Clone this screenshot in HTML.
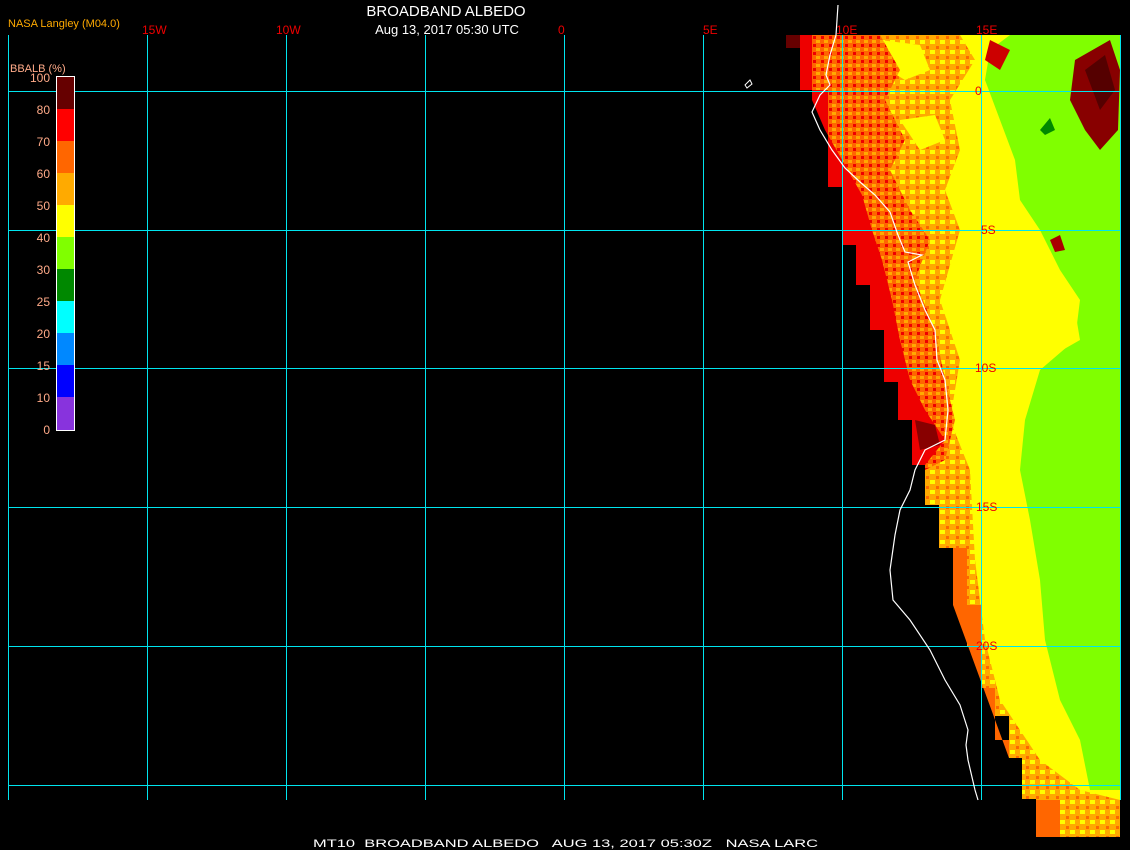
<!DOCTYPE html>
<html><head><meta charset="utf-8"><style>
html,body{margin:0;padding:0;background:#000;width:1130px;height:850px;overflow:hidden}
svg{display:block}
text{font-family:"Liberation Sans",sans-serif}
</style></head><body>
<svg width="1130" height="850" viewBox="0 0 1130 850" xmlns="http://www.w3.org/2000/svg">
<defs>
<pattern id="mixo" width="8" height="8" patternUnits="userSpaceOnUse">
<rect width="8" height="8" fill="#ff6600"/><rect x="0" y="0" width="4" height="3" fill="#ffaa00"/><rect x="5" y="4" width="3" height="3" fill="#ee0000"/>
</pattern>
<pattern id="mixy" width="10" height="10" patternUnits="userSpaceOnUse">
<rect width="10" height="10" fill="#ffaa00"/><rect x="0" y="0" width="5" height="4" fill="#ffff00"/><rect x="6" y="6" width="3" height="3" fill="#ff6600"/>
</pattern>
</defs>
<rect width="1130" height="850" fill="#000"/>
<polygon fill="#ffff00" points="786,35 1120,35 1120,837 1036,837 1036,799 1022,799 1022,758 1009,758 1009,716 995,716 995,688 981,688 981,647 967,647 967,605 953,605 953,548 939,548 939,505 925,505 925,465 912,465 912,420 898,420 898,382 884,382 884,330 870,330 870,285 856,285 856,245 843,245 843,187 828,187 828,90 800,90 800,48 786,48"/>
<polygon fill="#80ff00" points="1010,35 1120,35 1120,790 1090,790 1080,740 1060,700 1045,640 1040,580 1030,520 1020,470 1025,420 1040,370 1075,340 1080,300 1060,270 1040,230 1020,200 1015,160 1000,120 985,80 990,50"/>
<polygon fill="#ffff00" points="1030,300 1075,310 1080,340 1045,360 1030,340"/>
<polygon fill="url(#mixy)" points="786,35 960,35 975,60 950,100 960,150 945,190 960,230 940,300 960,360 950,420 970,470 975,560 985,640 1000,700 1040,760 1080,790 1120,800 1120,837 1036,837 1036,799 1022,799 1022,758 1009,758 1009,716 995,716 995,688 981,688 981,647 967,647 967,605 953,605 953,548 939,548 939,505 925,505 925,465 912,465 912,420 898,420 898,382 884,382 884,330 870,330 870,285 856,285 856,245 843,245 843,187 828,187 828,90 800,90 800,48 786,48"/>
<polygon fill="#ffff00" points="880,40 920,45 930,70 905,80 880,65"/>
<polygon fill="#ffff00" points="900,120 935,115 945,140 920,150"/>
<polygon fill="url(#mixo)" points="786,35 880,35 900,70 885,100 905,140 890,170 910,210 930,240 915,280 935,330 945,380 955,420 945,460 925,470 925,465 912,465 912,420 898,420 898,382 884,382 884,330 870,330 870,285 856,285 856,245 843,245 843,187 828,187 828,90 800,90 800,48 786,48"/>
<polygon fill="#ff6600" points="953,548 967,548 967,605 981,605 981,688 995,688 995,740 1009,740 1009,758 953,605"/>
<polygon fill="#ff6600" points="1036,800 1060,800 1060,837 1036,837"/>
<polygon fill="#ee0000" points="786,35 812,35 812,100 825,130 845,165 862,195 872,230 882,260 892,300 900,340 910,380 925,410 945,440 925,465 912,465 912,420 898,420 898,382 884,382 884,330 870,330 870,285 856,285 856,245 843,245 843,187 828,187 828,90 800,90 800,48 786,48"/>
<polygon fill="#660000" points="786,35 800,35 800,48 786,48"/>
<polygon fill="#880000" points="915,420 935,425 940,445 920,450"/>
<polygon fill="#880000" points="1075,60 1110,40 1120,70 1118,130 1100,150 1085,130 1070,100"/>
<polygon fill="#550000" points="1085,70 1105,55 1115,90 1100,110"/>
<polygon fill="#cc0000" points="990,40 1010,50 1000,70 985,60"/>
<polygon fill="#008800" points="1040,130 1050,118 1055,130 1045,135"/>
<polygon fill="#aa0000" points="1050,240 1060,235 1065,250 1055,252"/>
<g stroke="#00e5ee" stroke-width="1">
<line x1="8.5" y1="35" x2="8.5" y2="800"/><line x1="147.5" y1="35" x2="147.5" y2="800"/><line x1="286.5" y1="35" x2="286.5" y2="800"/><line x1="425.5" y1="35" x2="425.5" y2="800"/><line x1="564.5" y1="35" x2="564.5" y2="800"/><line x1="703.5" y1="35" x2="703.5" y2="800"/><line x1="842.5" y1="35" x2="842.5" y2="800"/><line x1="981.5" y1="35" x2="981.5" y2="800"/><line x1="1120.5" y1="35" x2="1120.5" y2="800"/>
<line x1="8" y1="91.5" x2="1120" y2="91.5"/><line x1="8" y1="230.5" x2="1120" y2="230.5"/><line x1="8" y1="368.5" x2="1120" y2="368.5"/><line x1="8" y1="507.5" x2="1120" y2="507.5"/><line x1="8" y1="646.5" x2="1120" y2="646.5"/><line x1="8" y1="785.5" x2="1120" y2="785.5"/>
</g>
<polyline fill="none" stroke="#fff" stroke-width="1.2" points="838,5 836,35 830,55 826,75 830,85 820,95 812,112 820,130 832,150 845,168 860,182 875,195 890,212 898,235 905,252 922,255 908,262 915,285 925,310 935,330 937,360 945,380 948,410 945,440 925,450 915,470 910,490 900,510 895,535 890,570 893,600 910,620 930,650 945,680 960,705 968,730 966,745 968,760 975,790 978,800"/>
<polygon fill="none" stroke="#fff" stroke-width="1" points="745,85 750,80 752,84 747,88"/>
<text x="446" y="16" fill="#fff" font-size="15" text-anchor="middle">BROADBAND ALBEDO</text>
<text x="447" y="34" fill="#fff" font-size="13" text-anchor="middle">Aug 13, 2017 05:30 UTC</text>
<text x="8" y="27" fill="#ffaa00" font-size="11">NASA Langley (M04.0)</text>
<g fill="#ee0000" font-size="12" font-family="Liberation Mono,monospace">
<text x="142" y="34">15W</text><text x="276" y="34">10W</text><text x="558" y="34">0</text><text x="703" y="34">5E</text><text x="836" y="34">10E</text><text x="976" y="34">15E</text>
<text x="975" y="95">0</text><text x="981" y="234">5S</text><text x="975" y="372">10S</text><text x="976" y="511">15S</text><text x="976" y="650">20S</text>
</g>
<text x="10" y="72" fill="#ffaa88" font-size="11">BBALB (%)</text>
<g>
<rect x="57" y="77" width="17" height="32" fill="#660000"/>
<rect x="57" y="109" width="17" height="32" fill="#ff0000"/>
<rect x="57" y="141" width="17" height="32" fill="#ff6600"/>
<rect x="57" y="173" width="17" height="32" fill="#ffaa00"/>
<rect x="57" y="205" width="17" height="32" fill="#ffff00"/>
<rect x="57" y="237" width="17" height="32" fill="#80ff00"/>
<rect x="57" y="269" width="17" height="32" fill="#008800"/>
<rect x="57" y="301" width="17" height="32" fill="#00ffff"/>
<rect x="57" y="333" width="17" height="32" fill="#0088ff"/>
<rect x="57" y="365" width="17" height="32" fill="#0000ff"/>
<rect x="57" y="397" width="17" height="33" fill="#8833dd"/>
<rect x="56.5" y="76.5" width="18" height="354" fill="none" stroke="#fff" stroke-width="1"/>
</g>
<g fill="#ffaa88" font-size="12" text-anchor="end">
<text x="50" y="82">100</text><text x="50" y="114">80</text><text x="50" y="146">70</text><text x="50" y="178">60</text><text x="50" y="210">50</text><text x="50" y="242">40</text><text x="50" y="274">30</text><text x="50" y="306">25</text><text x="50" y="338">20</text><text x="50" y="370">15</text><text x="50" y="402">10</text><text x="50" y="434">0</text>
</g>
<text x="313" y="847" fill="#fff" font-size="11" font-family="Liberation Mono,monospace" textLength="505" lengthAdjust="spacingAndGlyphs" xml:space="preserve">MT10  BROADBAND ALBEDO   AUG 13, 2017 05:30Z   NASA LARC</text>
</svg>
</body></html>
